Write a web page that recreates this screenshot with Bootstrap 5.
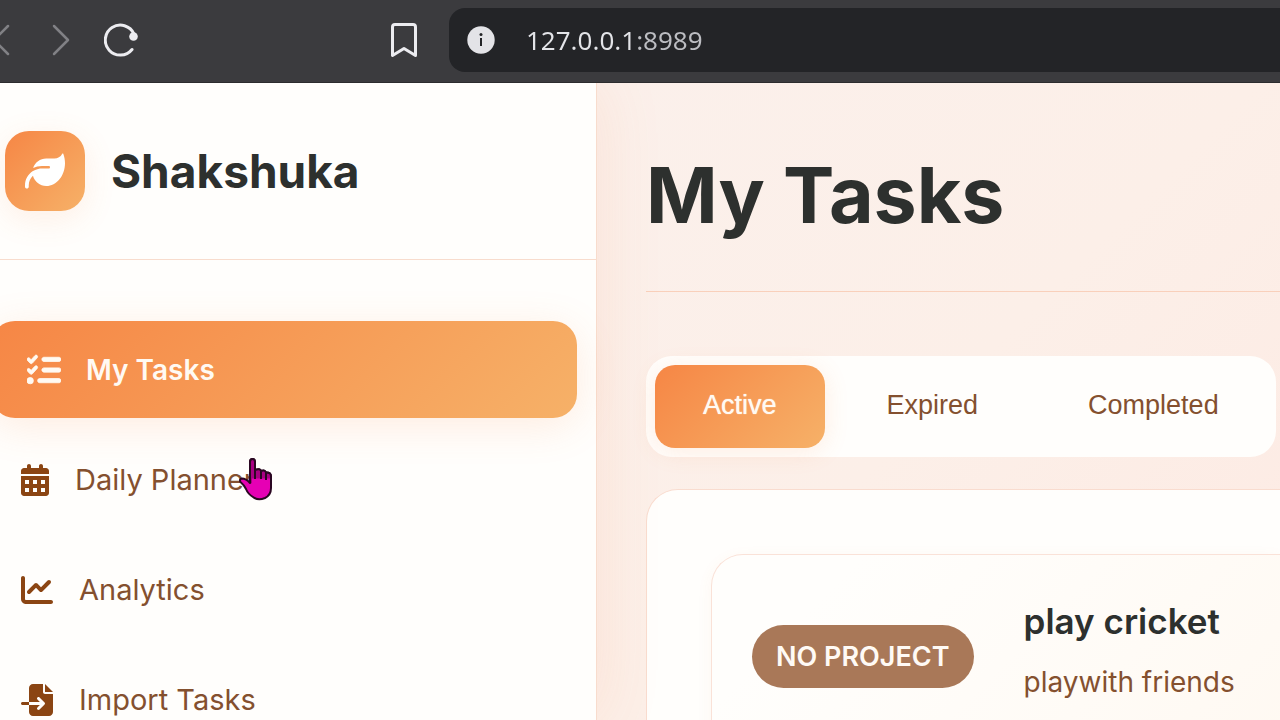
<!DOCTYPE html>
<html lang="en">
<head>
<meta charset="utf-8">
<meta name="viewport" content="width=device-width, initial-scale=1">
<title>Shakshuka - My Tasks</title>
<link href="https://cdn.jsdelivr.net/npm/bootstrap@5.3.0/dist/css/bootstrap.min.css" rel="stylesheet">
<style>
:root {
  --ink: #2d302e;
  --brown: #84502f;
  --icon-brown: #8b4513;
  --line: #f8dccd;
  --paper: #fffefc;
  --warm: linear-gradient(135deg, #f68645, #f6b168);
}
body { font-family: Inter, sans-serif; color: var(--ink); background: #fceee8; }
svg { display: block; flex: none; }

/* browser bar */
.browser-bar { height: 83px; padding-bottom: 2px; background: #3b3b3e; border-bottom: 1px solid #2c2c2e; color: #ececf0; }
.bar-btn { padding: 0; border: 0; background: none; color: inherit; }
.bar-btn:disabled { color: #818185; }
.nav-tools { width: 390px; gap: 33px; margin-left: -10px; }
.address { height: 64px; margin-left: 29px; padding-left: 18px; background: #232427; border-radius: 16px 0 0 16px; }
.address input {
  margin-left: 31px; padding: 0; border: 0; outline: 0; font: 26px/40px "Noto Sans", sans-serif;
  color: transparent; background: linear-gradient(90deg, #e3e4e8 110px, #bcbdc2 110px); -webkit-background-clip: text; background-clip: text;
}

/* sidebar */
.side { width: 597px; background: var(--paper); border-right: 1px solid var(--line); box-shadow: 0 0 64px rgba(246, 134, 69, .12); }
.brand-row { padding: 48px 5px; border-bottom: 1px solid var(--line); gap: 26px; }
.brand-mark { width: 80px; height: 80px; border-radius: 24px; background: var(--warm); color: #fff; box-shadow: 0 8px 32px rgba(246, 134, 69, .12); }
.brand-name { font-size: 46px; line-height: 58px; font-weight: 700; }
.side-menu { gap: 13px; margin: 61px 19px 0 -9px; }
.side-link { height: 97px; padding-left: 30px; gap: 26px; border-radius: 24px; font-size: 29px; line-height: 40px; color: var(--brown); text-decoration: none; }
.side-link svg { color: var(--icon-brown); }
.side-link.current { padding-left: 36px; gap: 25px; font-size: 28px; background: var(--warm); color: #fffaf3; font-weight: 600; box-shadow: 0 8px 40px rgba(246, 134, 69, .15); }
.side-link.current svg { color: inherit; }

/* tasks */
.tasks { min-width: 0; padding: 48px 0 0 49px; background: linear-gradient(135deg, #fbf0eb, #fcefe8 50%, #fdeae3); }
.page-title { font-size: 77px; line-height: 96px; font-weight: 700; padding: 16px 0 48px; border-bottom: 1px solid #f9d0bb; }
.tab-strip { width: max-content; margin-top: 64px; padding: 9px; gap: 14px; background: var(--paper); border-radius: 26px; }
.tab-btn { height: 83px; padding: 0 48px 4px; border: 0; border-radius: 20px; background: none; color: var(--brown); font: 27px/40px "Liberation Sans", sans-serif; }
.tab-btn.current { background: var(--warm); color: #fffaf3; box-shadow: 0 4px 24px rgba(246, 134, 69, .14); text-shadow: 0 0 1px #fffaf3; }
.panel { margin-top: 32px; padding: 64px 0 0 64px; background: var(--paper); border: 1px solid #f9dccf; border-width: 1px 0 0 1px; border-radius: 32px 0 0 0; }
.task-item { height: 100%; padding: 46px 40px; gap: 50px; border: 1px solid #fae2d8; border-width: 1px 0 0 1px; border-radius: 32px 0 0 0; background: linear-gradient(135deg, #fffefc 20%, #fff9f2); box-shadow: 0 4px 16px rgba(246, 134, 69, .06); }
.project-tag { margin-top: 24px; padding: 12px 24px; border-radius: 32px; background: #a97858; color: #fffaf5; font-size: 27px; line-height: 39px; font-weight: 600; white-space: nowrap; }
.task-name { font-size: 35px; line-height: 40px; font-weight: 600; margin: 0 0 21px; white-space: nowrap; }
.task-note { font-size: 28px; line-height: 40px; color: var(--brown); margin: 0; white-space: nowrap; }

/* the hand lies over the menu */
.pointer { position: absolute; left: 239px; top: 457px; z-index: 10; pointer-events: none; }
</style>
</head>
<body class="vh-100 overflow-hidden d-flex flex-column position-relative">

<header class="browser-bar d-flex align-items-center flex-shrink-0">
  <div class="nav-tools d-flex align-items-center flex-shrink-0">
    <button class="bar-btn me-2" disabled aria-label="Back"><svg width="20" height="32" viewBox="0 0 20 32" fill="none" stroke="currentColor" stroke-width="2.5" stroke-linecap="round" stroke-linejoin="round"><path d="M18 2 4 16l14 14"/></svg></button>
    <button class="bar-btn" disabled aria-label="Forward"><svg width="20" height="32" viewBox="0 0 20 32" fill="none" stroke="currentColor" stroke-width="2.5" stroke-linecap="round" stroke-linejoin="round"><path d="m3 2 14 14L3 30"/></svg></button>
    <button class="bar-btn" aria-label="Reload"><svg width="34" height="34" viewBox="0 0 34 34" fill="none" stroke="currentColor" stroke-width="3" stroke-linecap="round"><path d="M28 26.500A15 15 0 1 1 30 11"/><circle cx="29.500" cy="13.500" r="4.300" fill="currentColor" stroke="none"/></svg></button>
  </div>
  <button class="bar-btn ms-2" aria-label="Bookmark"><svg width="32" height="36" viewBox="0 0 32 36" fill="none" stroke="currentColor" stroke-width="3" stroke-linejoin="round"><path d="M7 2.500h18q2.500 0 2.500 2.500v28.500L16 26.500 4.500 33.500V5Q4.500 2.500 7 2.500Z"/></svg></button>
  <form class="address d-flex align-items-center flex-grow-1" onsubmit="return false">
    <svg width="28" height="28" viewBox="0 0 28 28"><circle cx="14" cy="14" r="13.700" fill="#e3e3e7"/><circle cx="14" cy="8.500" r="1.500" fill="#232427"/><path d="M14 12V20" stroke="#232427" stroke-width="2"/></svg>
    <input class="flex-grow-1" type="text" value="127.0.0.1:8989" aria-label="Address" spellcheck="false">
  </form>
</header>

<div class="d-flex flex-grow-1 overflow-hidden">
  <aside class="side flex-shrink-0 position-relative">
    <div class="brand-row d-flex align-items-center">
      <div class="brand-mark d-flex align-items-center justify-content-center">
        <svg width="40" height="40" viewBox="0 0 512 512" fill="currentColor"><path d="M272 96c-78.600 0-145.100 51.500-167.700 122.500c33.600-17 71.500-26.500 111.700-26.500h88c8.800 0 16 7.200 16 16s-7.200 16-16 16H216c-16.600 0-32.700 1.900-48.300 5.400c-25.900 5.900-49.900 16.400-71.400 30.700C38.300 298.800 0 364.900 0 440v16c0 13.300 10.700 24 24 24s24-10.700 24-24V440c0-48.700 20.700-92.500 53.800-123.200C121.600 392.300 190.300 448 272 448l1 0c132.100-.7 239-130.900 239-291.400c0-42.600-7.500-83.100-21.100-119.600c-2.600-6.900-12.700-6.600-16.200-.1C455.900 72.100 418.700 96 376 96L272 96z"/></svg>
      </div>
      <span class="brand-name">Shakshuka</span>
    </div>
    <nav class="side-menu d-flex flex-column">
      <a class="side-link current d-flex align-items-center" href="#tasks" aria-current="page">
        <svg width="34" height="34" viewBox="0 0 512 512" fill="currentColor" stroke="currentColor" stroke-width="12"><path d="M152.100 38.200c9.900 8.900 10.700 24 1.800 33.900l-72 80c-4.400 4.900-10.600 7.800-17.200 7.900s-12.900-2.400-17.600-7L7 113C-2.300 103.600-2.300 88.400 7 79s24.600-9.400 33.900 0l22.100 22.100 55.100-61.200c8.900-9.900 24-10.700 33.900-1.800zm0 160c9.900 8.900 10.700 24 1.800 33.900l-72 80c-4.400 4.900-10.600 7.800-17.200 7.900s-12.900-2.400-17.600-7L7 273c-9.400-9.400-9.400-24.600 0-33.900s24.600-9.400 33.900 0l22.100 22.100 55.100-61.200c8.900-9.900 24-10.700 33.900-1.800zM224 96c0-17.700 14.300-32 32-32H480c17.700 0 32 14.300 32 32s-14.300 32-32 32H256c-17.700 0-32-14.300-32-32zm0 160c0-17.700 14.300-32 32-32H480c17.700 0 32 14.300 32 32s-14.300 32-32 32H256c-17.700 0-32-14.300-32-32zM160 416c0-17.700 14.300-32 32-32H480c17.700 0 32 14.300 32 32s-14.300 32-32 32H192c-17.700 0-32-14.300-32-32zM48 368a48 48 0 1 1 0 96 48 48 0 1 1 0-96z"/></svg>
        <span>My Tasks</span>
      </a>
      <a class="side-link d-flex align-items-center" href="#planner">
        <svg width="28" height="32" viewBox="0 0 448 512" fill="currentColor" fill-rule="evenodd"><path d="M128 0c17.700 0 32 14.300 32 32V64H288V32c0-17.700 14.300-32 32-32s32 14.300 32 32V64h48c26.500 0 48 21.500 48 48v48H0V112C0 85.500 21.500 64 48 64H96V32c0-17.700 14.300-32 32-32zM0 192H448V464c0 26.500-21.500 48-48 48H48c-26.500 0-48-21.500-48-48V192zM64 256h64v64H64zM192 256h64v64H192zM320 256h64v64H320zM64 384h64v64H64zM192 384h64v64H192zM320 384h64v64H320z"/></svg>
        <span>Daily Planner</span>
      </a>
      <a class="side-link d-flex align-items-center" href="#analytics">
        <svg width="32" height="32" viewBox="0 0 512 512" fill="currentColor"><path d="M64 64c0-17.700-14.300-32-32-32S0 46.300 0 64V400c0 44.200 35.800 80 80 80H480c17.700 0 32-14.300 32-32s-14.300-32-32-32H80c-8.800 0-16-7.200-16-16V64zm406.600 86.600c12.500-12.500 12.500-32.800 0-45.300s-32.800-12.500-45.300 0L320 210.700l-57.400-57.400c-12.500-12.500-32.800-12.500-45.300 0l-112 112c-12.500 12.500-12.500 32.800 0 45.300s32.800 12.500 45.300 0L240 221.300l57.400 57.400c12.500 12.500 32.800 12.500 45.300 0l128-128z"/></svg>
        <span>Analytics</span>
      </a>
      <a class="side-link d-flex align-items-center" href="#import">
        <svg width="32" height="32" viewBox="0 0 512 512" fill="currentColor"><path d="M128 64c0-35.300 28.700-64 64-64H352V128c0 17.700 14.300 32 32 32H512V448c0 35.300-28.700 64-64 64H192c-35.300 0-64-28.700-64-64V336H302.100l-39 39c-9.400 9.400-9.400 24.600 0 33.900s24.600 9.400 33.900 0l80-80c9.400-9.400 9.400-24.600 0-33.900l-80-80c-9.400-9.400-24.600-9.400-33.900 0s-9.400 24.600 0 33.900l39 39H128V64zm0 224v48H24c-13.300 0-24-10.700-24-24s10.700-24 24-24H128zM512 128H384V0L512 128z"/></svg>
        <span>Import Tasks</span>
      </a>
    </nav>
  </aside>

  <main class="tasks flex-grow-1 d-flex flex-column">
    <h1 class="page-title m-0 flex-shrink-0">My Tasks</h1>
    <div class="tab-strip d-flex flex-shrink-0">
      <button class="tab-btn current" type="button">Active</button>
      <button class="tab-btn" type="button">Expired</button>
      <button class="tab-btn" type="button">Completed</button>
    </div>
    <section class="panel flex-grow-1">
      <article class="task-item d-flex align-items-start">
        <span class="project-tag">NO PROJECT</span>
        <div>
          <h2 class="task-name">play cricket</h2>
          <p class="task-note">playwith friends</p>
        </div>
      </article>
    </section>
  </main>
</div>

<svg class="pointer" width="34" height="44" viewBox="0 0 34 44" fill="#e600b4" stroke="#2b0722" stroke-width="2" stroke-linejoin="round"><path d="M11 5q0-3 2.500-3T16 5v8q5-2 6 1 4-1.500 5 1.500 5-.5 5 4V31q0 7-6 10-7 3-12-1-5-3-7-8-2-4-5.500-7Q0 22 3 21.500q4 0 8 4.500Z"/><path d="M11 7q0-4 2.500-4.500Q16 3 16 6v7q5-2 6 1 4-1.500 5 1.500l4 2v4H13v5l-2-1Z" fill="#a90083" stroke="none"/><path d="M11 26V5q0-3 2.500-3T16 5v17M22 22v-8M27 23v-7.500M16 13q5-2 6 1 4-1.500 5 1.500 5-.5 5 4" fill="none"/></svg>

<script src="https://cdn.jsdelivr.net/npm/bootstrap@5.3.0/dist/js/bootstrap.bundle.min.js"></script>
</body>
</html>
